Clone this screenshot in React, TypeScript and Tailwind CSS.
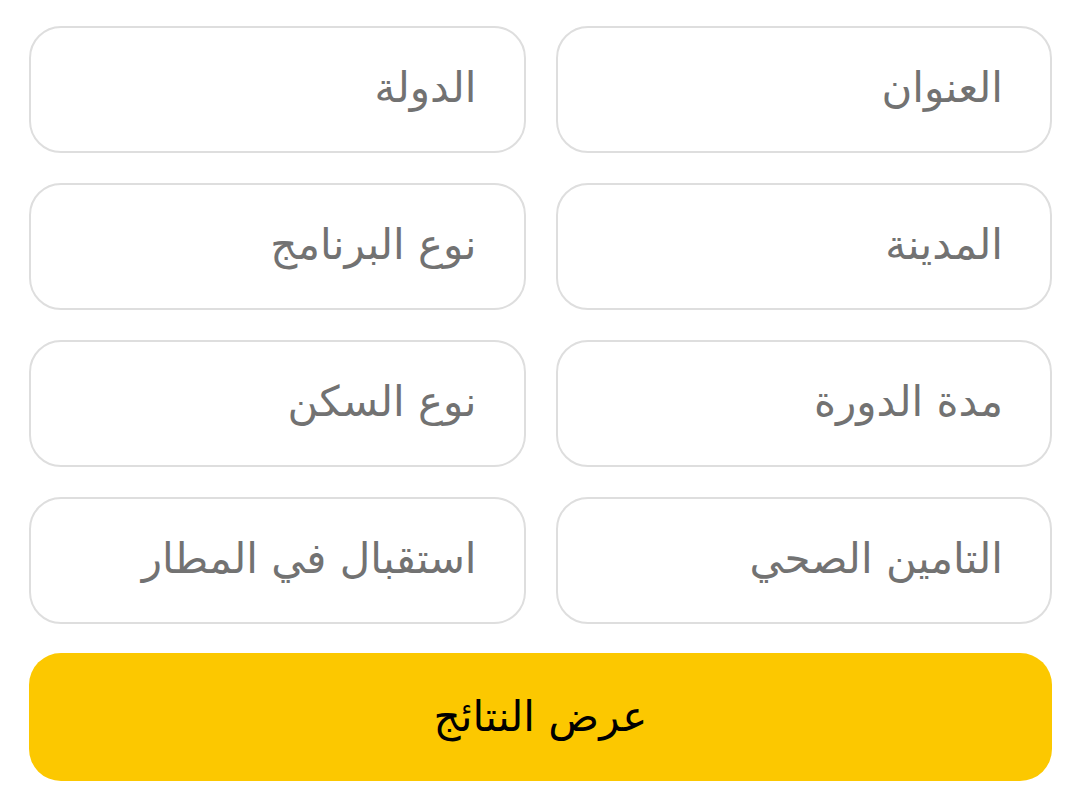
import React from 'react';

const fields = [
  'العنوان',
  'الدولة',
  'المدينة',
  'نوع البرنامج',
  'مدة الدورة',
  'نوع السكن',
  'التامين الصحي',
  'استقبال في المطار',
];

export default function App() {
  return (
    <div
      dir="rtl"
      className="min-h-screen bg-white pt-[26px] pl-[29px] pr-[28px] font-['DejaVu_Sans',sans-serif]"
    >
      <div className="grid grid-cols-2 gap-[30px]">
        {fields.map((label) => (
          <div
            key={label}
            className="h-[127px] rounded-[32px] border-2 border-[#dedede] flex items-center pl-[46px] pr-[47px]"
          >
            <span className="text-[42px] leading-none text-[#727272] -mt-[3px]">{label}</span>
          </div>
        ))}
      </div>

      <button className="mt-[29px] w-full h-[128px] rounded-[32px] bg-[#fcc800] flex items-center justify-center">
        <span className="text-[42px] leading-none text-black">عرض النتائج</span>
      </button>
    </div>
  );
}
